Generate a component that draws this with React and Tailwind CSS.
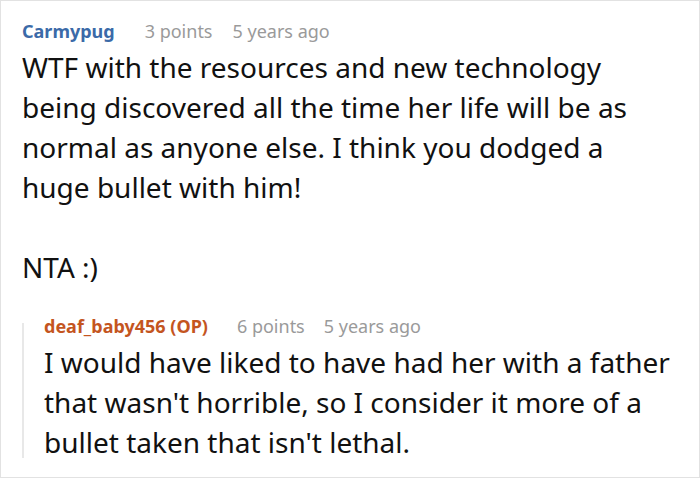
export default function App() {
  return (
    <div className="w-[700px] h-[478px] bg-white border border-[#e2e2e2] overflow-hidden" style={{ fontFamily: '"Noto Sans", "Open Sans", sans-serif' }}>
      <div className="pl-[21px] pt-[17px] pr-[10px]">
        <div className="flex items-baseline text-[18px] leading-[26px]">
          <span className="font-bold text-[#3b6aa8]">Carmypug</span>
          <span className="ml-[30px] text-[#9a9a9a]">3 points</span>
          <span className="ml-[20px] text-[#9a9a9a]">5 years ago</span>
        </div>
        <div className="text-[28px] leading-[40px] text-[#111] mt-[3px] pr-[20px]">
          <p>WTF with the resources and new technology being discovered all the time her life will be as normal as anyone else. I think you dodged a huge bullet with him!</p>
          <p className="mt-[40px]">NTA :)</p>
        </div>
        <div className="mt-[26px] flex">
          <div className="w-[2px] bg-[#e8e8e8] mt-[10px] mb-[4px] shrink-0" />
          <div className="pl-[20px] flex-1">
            <div className="flex items-baseline text-[18px] leading-[26px]">
              <span className="font-bold text-[#c4551f]">deaf_baby456 (OP)</span>
              <span className="ml-[29px] text-[#9a9a9a]">6 points</span>
              <span className="ml-[19px] text-[#9a9a9a]">5 years ago</span>
            </div>
            <div className="text-[28px] leading-[40px] text-[#111] mt-[3px]">
              <p>I would have liked to have had her with a father that wasn't horrible, so I consider it more of a bullet taken that isn't lethal.</p>
            </div>
          </div>
        </div>
      </div>
    </div>
  );
}
